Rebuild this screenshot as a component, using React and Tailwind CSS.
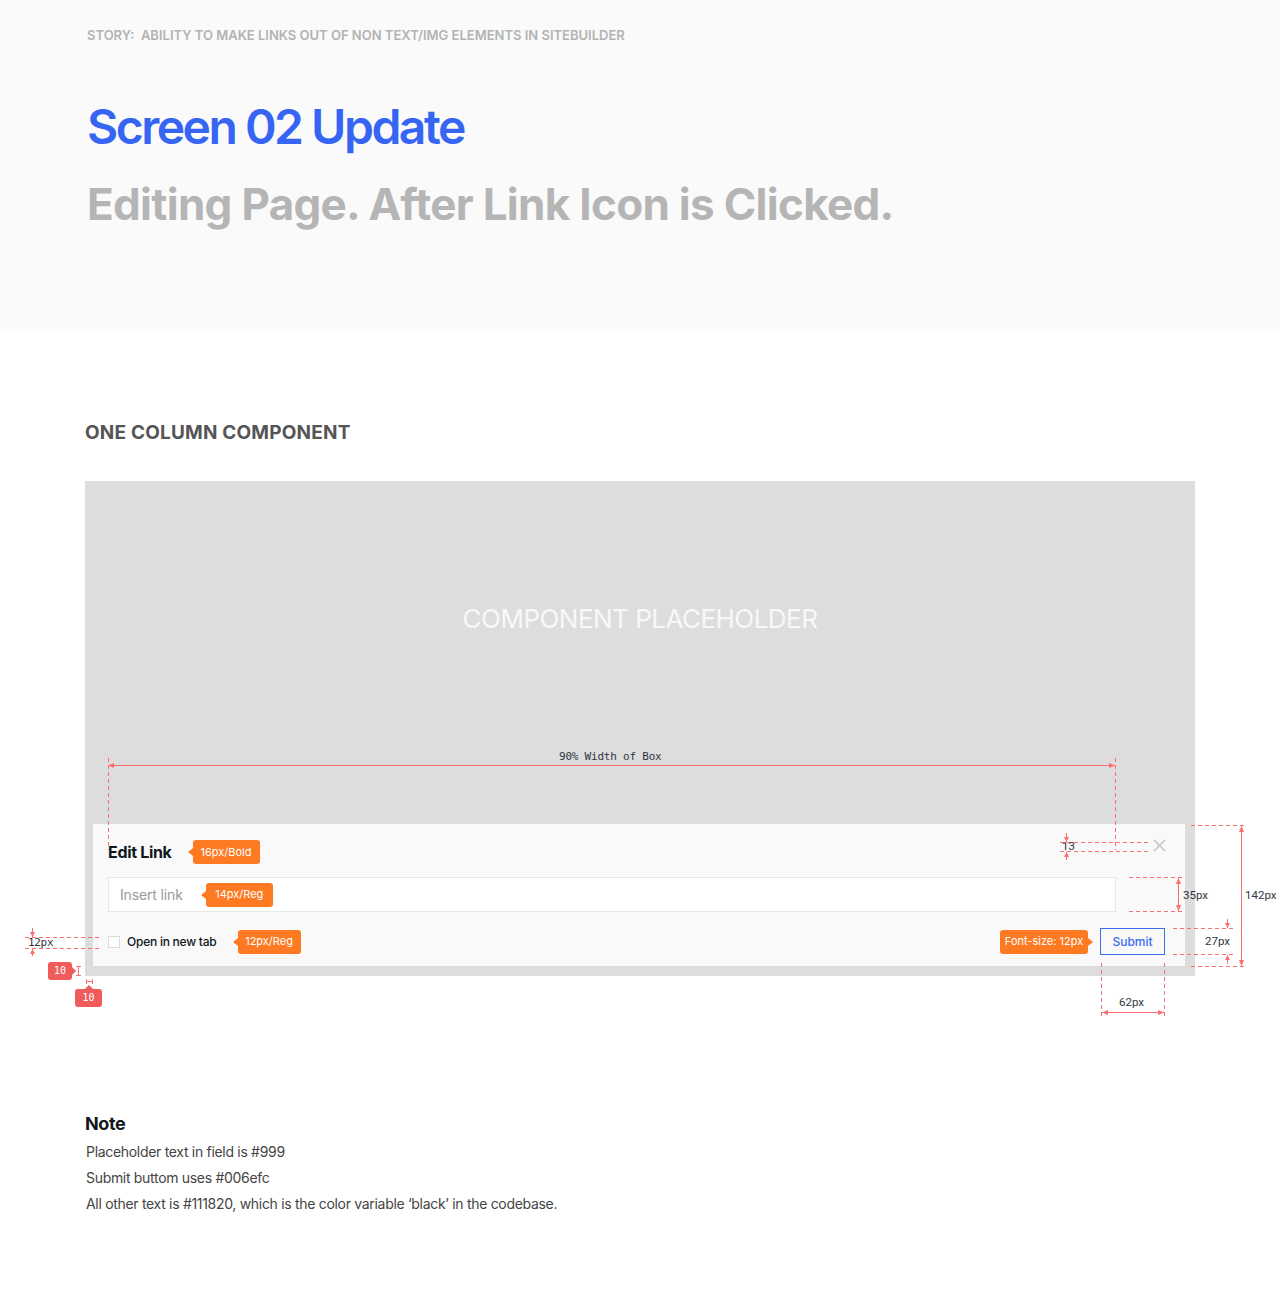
import React from "react";

function Tag({ className = "", children, right }) {
  return (
    <span className={"relative shrink-0 h-[24px] rounded-[3px] bg-[#fd7a22] text-white text-[11px] leading-none flex items-center justify-center font-['Inter',sans-serif] tracking-normal font-normal " + className}>
      {right ? (
        <span className="absolute right-[-5px] top-[8px] w-0 h-0 border-y-[4px] border-y-transparent border-l-[5px] border-l-[#fd7a22]" />
      ) : (
        <span className="absolute left-[-5px] top-[8px] w-0 h-0 border-y-[4px] border-y-transparent border-r-[5px] border-r-[#fd7a22]" />
      )}
      {children}
    </span>
  );
}

const R = "#ff6e6e";

function Overlay() {
  const dash = { stroke: R, strokeWidth: 1, strokeDasharray: "4 3", fill: "none" };
  const solid = { stroke: R, strokeWidth: 1, fill: "none" };
  return (
    <svg className="absolute left-0 top-0 pointer-events-none" width="1280" height="1311" viewBox="0 0 1280 1311">
      <line x1="108.5" y1="758" x2="108.5" y2="850" {...dash} />
      <line x1="1115.5" y1="758" x2="1115.5" y2="850" {...dash} />
      <line x1="108" y1="765.5" x2="1115" y2="765.5" {...solid} />
      <polygon points="108,765.5 114,763 114,768" fill={R} />
      <polygon points="1115,765.5 1109,763 1109,768" fill={R} />

      <line x1="1060" y1="842.5" x2="1148" y2="842.5" {...dash} />
      <line x1="1060" y1="851.5" x2="1148" y2="851.5" {...dash} />
      <line x1="1066.5" y1="833" x2="1066.5" y2="842" {...solid} />
      <polygon points="1066.5,842 1064,837 1069,837" fill={R} />
      <line x1="1066.5" y1="852" x2="1066.5" y2="860" {...solid} />
      <polygon points="1066.5,852 1064,857 1069,857" fill={R} />

      <line x1="1129" y1="877.5" x2="1185" y2="877.5" {...dash} />
      <line x1="1129" y1="911.5" x2="1185" y2="911.5" {...dash} />
      <line x1="1178.5" y1="878" x2="1178.5" y2="911" {...solid} />
      <polygon points="1178.5,878 1176,884 1181,884" fill={R} />
      <polygon points="1178.5,911 1176,905 1181,905" fill={R} />

      <line x1="1191" y1="825.5" x2="1247" y2="825.5" {...dash} />
      <line x1="1191" y1="966.5" x2="1247" y2="966.5" {...dash} />
      <line x1="1241.5" y1="826" x2="1241.5" y2="966" {...solid} />
      <polygon points="1241.5,826 1239,832 1244,832" fill={R} />
      <polygon points="1241.5,966 1239,960 1244,960" fill={R} />

      <line x1="1173" y1="928.5" x2="1233" y2="928.5" {...dash} />
      <line x1="1173" y1="954.5" x2="1233" y2="954.5" {...dash} />
      <line x1="1227.5" y1="919" x2="1227.5" y2="928" {...solid} />
      <polygon points="1227.5,928 1225,923 1230,923" fill={R} />
      <line x1="1227.5" y1="955" x2="1227.5" y2="964" {...solid} />
      <polygon points="1227.5,955 1225,960 1230,960" fill={R} />

      <line x1="1101.5" y1="963" x2="1101.5" y2="1018" {...dash} />
      <line x1="1164.5" y1="963" x2="1164.5" y2="1018" {...dash} />
      <line x1="1102" y1="1012.5" x2="1164" y2="1012.5" {...solid} />
      <polygon points="1102,1012.5 1108,1010 1108,1015" fill={R} />
      <polygon points="1164,1012.5 1158,1010 1158,1015" fill={R} />

      <line x1="25" y1="937.5" x2="99" y2="937.5" {...dash} />
      <line x1="25" y1="948.5" x2="99" y2="948.5" {...dash} />
      <line x1="32.5" y1="928" x2="32.5" y2="937" {...solid} />
      <polygon points="32.5,937 30,932 35,932" fill={R} />
      <line x1="32.5" y1="949" x2="32.5" y2="956" {...solid} />
      <polygon points="32.5,949 30,954 35,954" fill={R} />

      <line x1="78.5" y1="966" x2="78.5" y2="976" {...solid} />
      <line x1="76" y1="966.5" x2="81" y2="966.5" {...solid} />
      <line x1="76" y1="975.5" x2="81" y2="975.5" {...solid} />
      <line x1="86" y1="981.5" x2="93" y2="981.5" {...solid} />
      <line x1="86.5" y1="979" x2="86.5" y2="984" {...solid} />
      <line x1="92.5" y1="979" x2="92.5" y2="984" {...solid} />

      <polygon points="72,967 76,971 72,975" fill="#f05b5b" />
      <polygon points="85,989 89,985 93,989" fill="#f05b5b" />
    </svg>
  );
}

function MLabel({ className, children }) {
  return (
    <div className={"absolute text-[11.5px] leading-none text-[#2f3540] font-['Roboto',sans-serif] " + className}>
      {children}
    </div>
  );
}

export default function App() {
  return (
    <div className="relative w-[1280px] h-[1311px] bg-white overflow-hidden font-['Inter',sans-serif]">
      <header className="h-[329px] bg-[#fafafa] pl-[87px] pt-[29px]">
        <p className="text-[13px] leading-none font-semibold text-[#b3b3b3] tracking-normal whitespace-pre">
          {"STORY:  ABILITY TO MAKE LINKS OUT OF NON TEXT/IMG ELEMENTS IN SITEBUILDER"}
        </p>
        <h1 className="mt-[61px] text-[48px] leading-none font-semibold text-[#3665f3] tracking-[-0.052em]">
          Screen 02 Update
        </h1>
        <h2 className="mt-[31px] text-[44px] leading-none font-bold text-[#b5b5b5] tracking-[-0.016em]">
          Editing Page. After Link Icon is Clicked.
        </h2>
      </header>

      <section className="pl-[85px]">
        <h3 className="mt-[94px] text-[19px] leading-none font-bold text-[#555555] tracking-[0.01em]">
          ONE COLUMN COMPONENT
        </h3>
        <div className="mt-[39px] w-[1110px] h-[495px] bg-[#dddddd] flex flex-col">
          <div className="pt-[125px] text-center text-[26px] leading-none text-[#f8f8f8] tracking-[-0.02em]">
            COMPONENT PLACEHOLDER
          </div>
          <div className="flex-1" />
          <div className="ml-[8px] mr-[10px] mb-[10px] h-[142px] bg-[#f9f9f9] pl-[15px] pr-[20px]">
            <div className="flex justify-between items-start pt-[15px]">
              <div className="mt-[1px] flex items-center">
                <span className="text-[16px] leading-none font-bold text-[#111820] tracking-[-0.02em]">
                  Edit Link
                </span>
                <Tag className="ml-[21px] w-[67px]">16px/Bold</Tag>
              </div>
              <svg width="13" height="13" viewBox="0 0 13 13" className="mr-[-1px]">
                <path d="M1 1L12 12M12 1L1 12" stroke="#c6c6c6" strokeWidth="1.7" />
              </svg>
            </div>
            <div className="mt-[13px] w-[1008px] h-[35px] border border-[#e7e7e7] bg-white pl-[11px] flex items-center text-[14px] text-[#999999] tracking-[-0.01em]">
              <span>Insert link</span>
              <Tag className="ml-[23px] w-[67px]">14px/Reg</Tag>
            </div>
            <div className="mt-[16px] flex items-center justify-between h-[27px]">
              <div className="flex items-center">
                <span className="w-[12px] h-[12px] border border-[#dcdcdc] bg-white" />
                <span className="ml-[7px] text-[12px] font-medium text-[#111820] tracking-[-0.02em]">
                  Open in new tab
                </span>
                <Tag className="ml-[21px] w-[63px]">12px/Reg</Tag>
              </div>
              <div className="flex items-center">
                <Tag className="w-[88px]" right>Font-size: 12px</Tag>
                <button className="ml-[12px] w-[65px] h-[27px] border border-[#3b6cf2] text-[12px] font-medium text-[#3b6cf2] flex items-center justify-center">
                  Submit
                </button>
              </div>
            </div>
          </div>
        </div>
      </section>

      <section className="pl-[85px] mt-[139px]">
        <h4 className="text-[18px] leading-none font-bold text-[#111820] tracking-[-0.02em]">Note</h4>
        <div className="mt-[6px] pl-[1px] text-[14px] leading-[26px] text-[#444444] tracking-[-0.022em]">
          <p>Placeholder text in field is #999</p>
          <p>Submit buttom uses #006efc</p>
          <p>All other text is #111820, which is the color variable ‘black’ in the codebase.</p>
        </div>
      </section>

      <Overlay />

      <div className="absolute left-[559px] top-[751px] text-[11px] leading-none text-[#2f3540] font-['DejaVu_Sans_Mono',monospace] tracking-[-0.02em]">
        90% Width of Box
      </div>

      <MLabel className="left-[1062px] top-[841px]">13</MLabel>
      <MLabel className="left-[1183px] top-[890px]">35px</MLabel>
      <MLabel className="left-[1245px] top-[890px]">142px</MLabel>
      <MLabel className="left-[1205px] top-[936px]">27px</MLabel>
      <MLabel className="left-[1119px] top-[997px]">62px</MLabel>
      <div className="absolute left-[28px] top-[937px] text-[11px] leading-none text-[#2f3540] font-['DejaVu_Sans_Mono',monospace] tracking-[-0.03em]">
        12px
      </div>

      <div className="absolute left-[48px] top-[962px] w-[24px] h-[18px] rounded-[3px] bg-[#f05b5b] text-white text-[10px] leading-none flex items-center justify-center font-['DejaVu_Sans_Mono',monospace]">
        10
      </div>
      <div className="absolute left-[75px] top-[989px] w-[27px] h-[18px] rounded-[3px] bg-[#f05b5b] text-white text-[10px] leading-none flex items-center justify-center font-['DejaVu_Sans_Mono',monospace]">
        10
      </div>
    </div>
  );
}
